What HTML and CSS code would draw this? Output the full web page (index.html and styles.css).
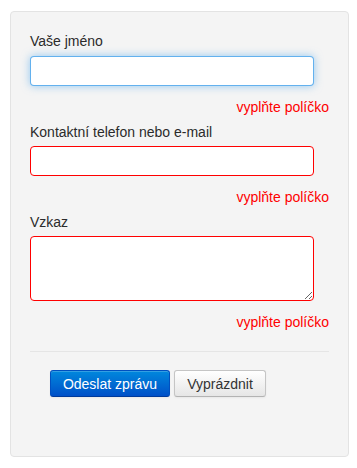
FILE: index.html
```html
<!DOCTYPE html>
<html lang="cs">
<head>
<meta charset="utf-8">
<title>Kontakt</title>
<link rel="stylesheet" href="styles.css">
</head>
<body>
<form class="well">
  <div class="field">
    <label class="label">Vaše jméno</label>
    <input class="input input-focus" type="text">
    <div class="error">vyplňte políčko</div>
  </div>
  <div class="field">
    <label class="label">Kontaktní telefon nebo e-mail</label>
    <input class="input input-error" type="text">
    <div class="error">vyplňte políčko</div>
  </div>
  <div class="field">
    <label class="label">Vzkaz</label>
    <textarea class="input textarea input-error"></textarea>
    <div class="error">vyplňte políčko</div>
  </div>
  <div class="actions">
    <button type="button" class="btn btn-primary">Odeslat zprávu</button>
    <button type="button" class="btn">Vyprázdnit</button>
  </div>
</form>
</body>
</html>
```
FILE: styles.css
```css
html, body {
  margin: 0;
  padding: 0;
  background: #fff;
}
body {
  font-family: "Liberation Sans", Arial, sans-serif;
  font-size: 14px;
  line-height: 20px;
  color: #2b2b2b;
  padding: 11px 8px 0 10px;
}
.well {
  width: 299px;
  height: 406px;
  background: #f4f4f4;
  border: 1px solid #e3e3e3;
  border-radius: 4px;
  padding: 19px;
  margin: 0;
  box-sizing: content-box;
}
.field {
  display: flex;
  flex-direction: column;
}
.label {
  display: block;
  height: 20px;
  margin-bottom: 5px;
}
.field + .field .label {
  margin-top: 5px;
  margin-bottom: 4px;
}
.input {
  box-sizing: border-box;
  width: 284px;
  height: 30px;
  margin: 0;
  padding: 4px 6px;
  background: #fff;
  border: 1px solid #ccc;
  border-radius: 4px;
  font: inherit;
  outline: none;
}
.input-focus {
  border-color: rgba(82, 168, 236, 0.9);
  box-shadow: 0 0 8px rgba(82, 168, 236, 0.6);
}
.input-error {
  border-color: #f00;
}
.textarea {
  height: 65px;
  resize: vertical;
  display: block;
}
.error {
  color: #f00;
  text-align: right;
  margin-top: 11px;
  height: 20px;
}
.actions {
  margin-top: 19px;
  border-top: 1px solid #e5e5e5;
  padding: 18px 20px 0;
  display: flex;
  gap: 4px;
}
.btn {
  box-sizing: border-box;
  height: 27px;
  padding: 0;
  font: inherit;
  font-size: 14px;
  color: #333;
  border: 1px solid #c5c5c5;
  border-bottom-color: #b3b3b3;
  border-radius: 3px;
  background: linear-gradient(#ffffff, #e6e6e6);
  box-shadow: inset 0 1px 0 rgba(255,255,255,.2), 0 1px 2px rgba(0,0,0,.05);
  cursor: pointer;
}
.btn-primary {
  color: #fff;
  width: 120px;
  background: linear-gradient(#0088dd, #0050c8);
  border-color: #0050c0 #0050c0 #003a9a;
}
.btn + .btn {
  width: 92px;
}
```
